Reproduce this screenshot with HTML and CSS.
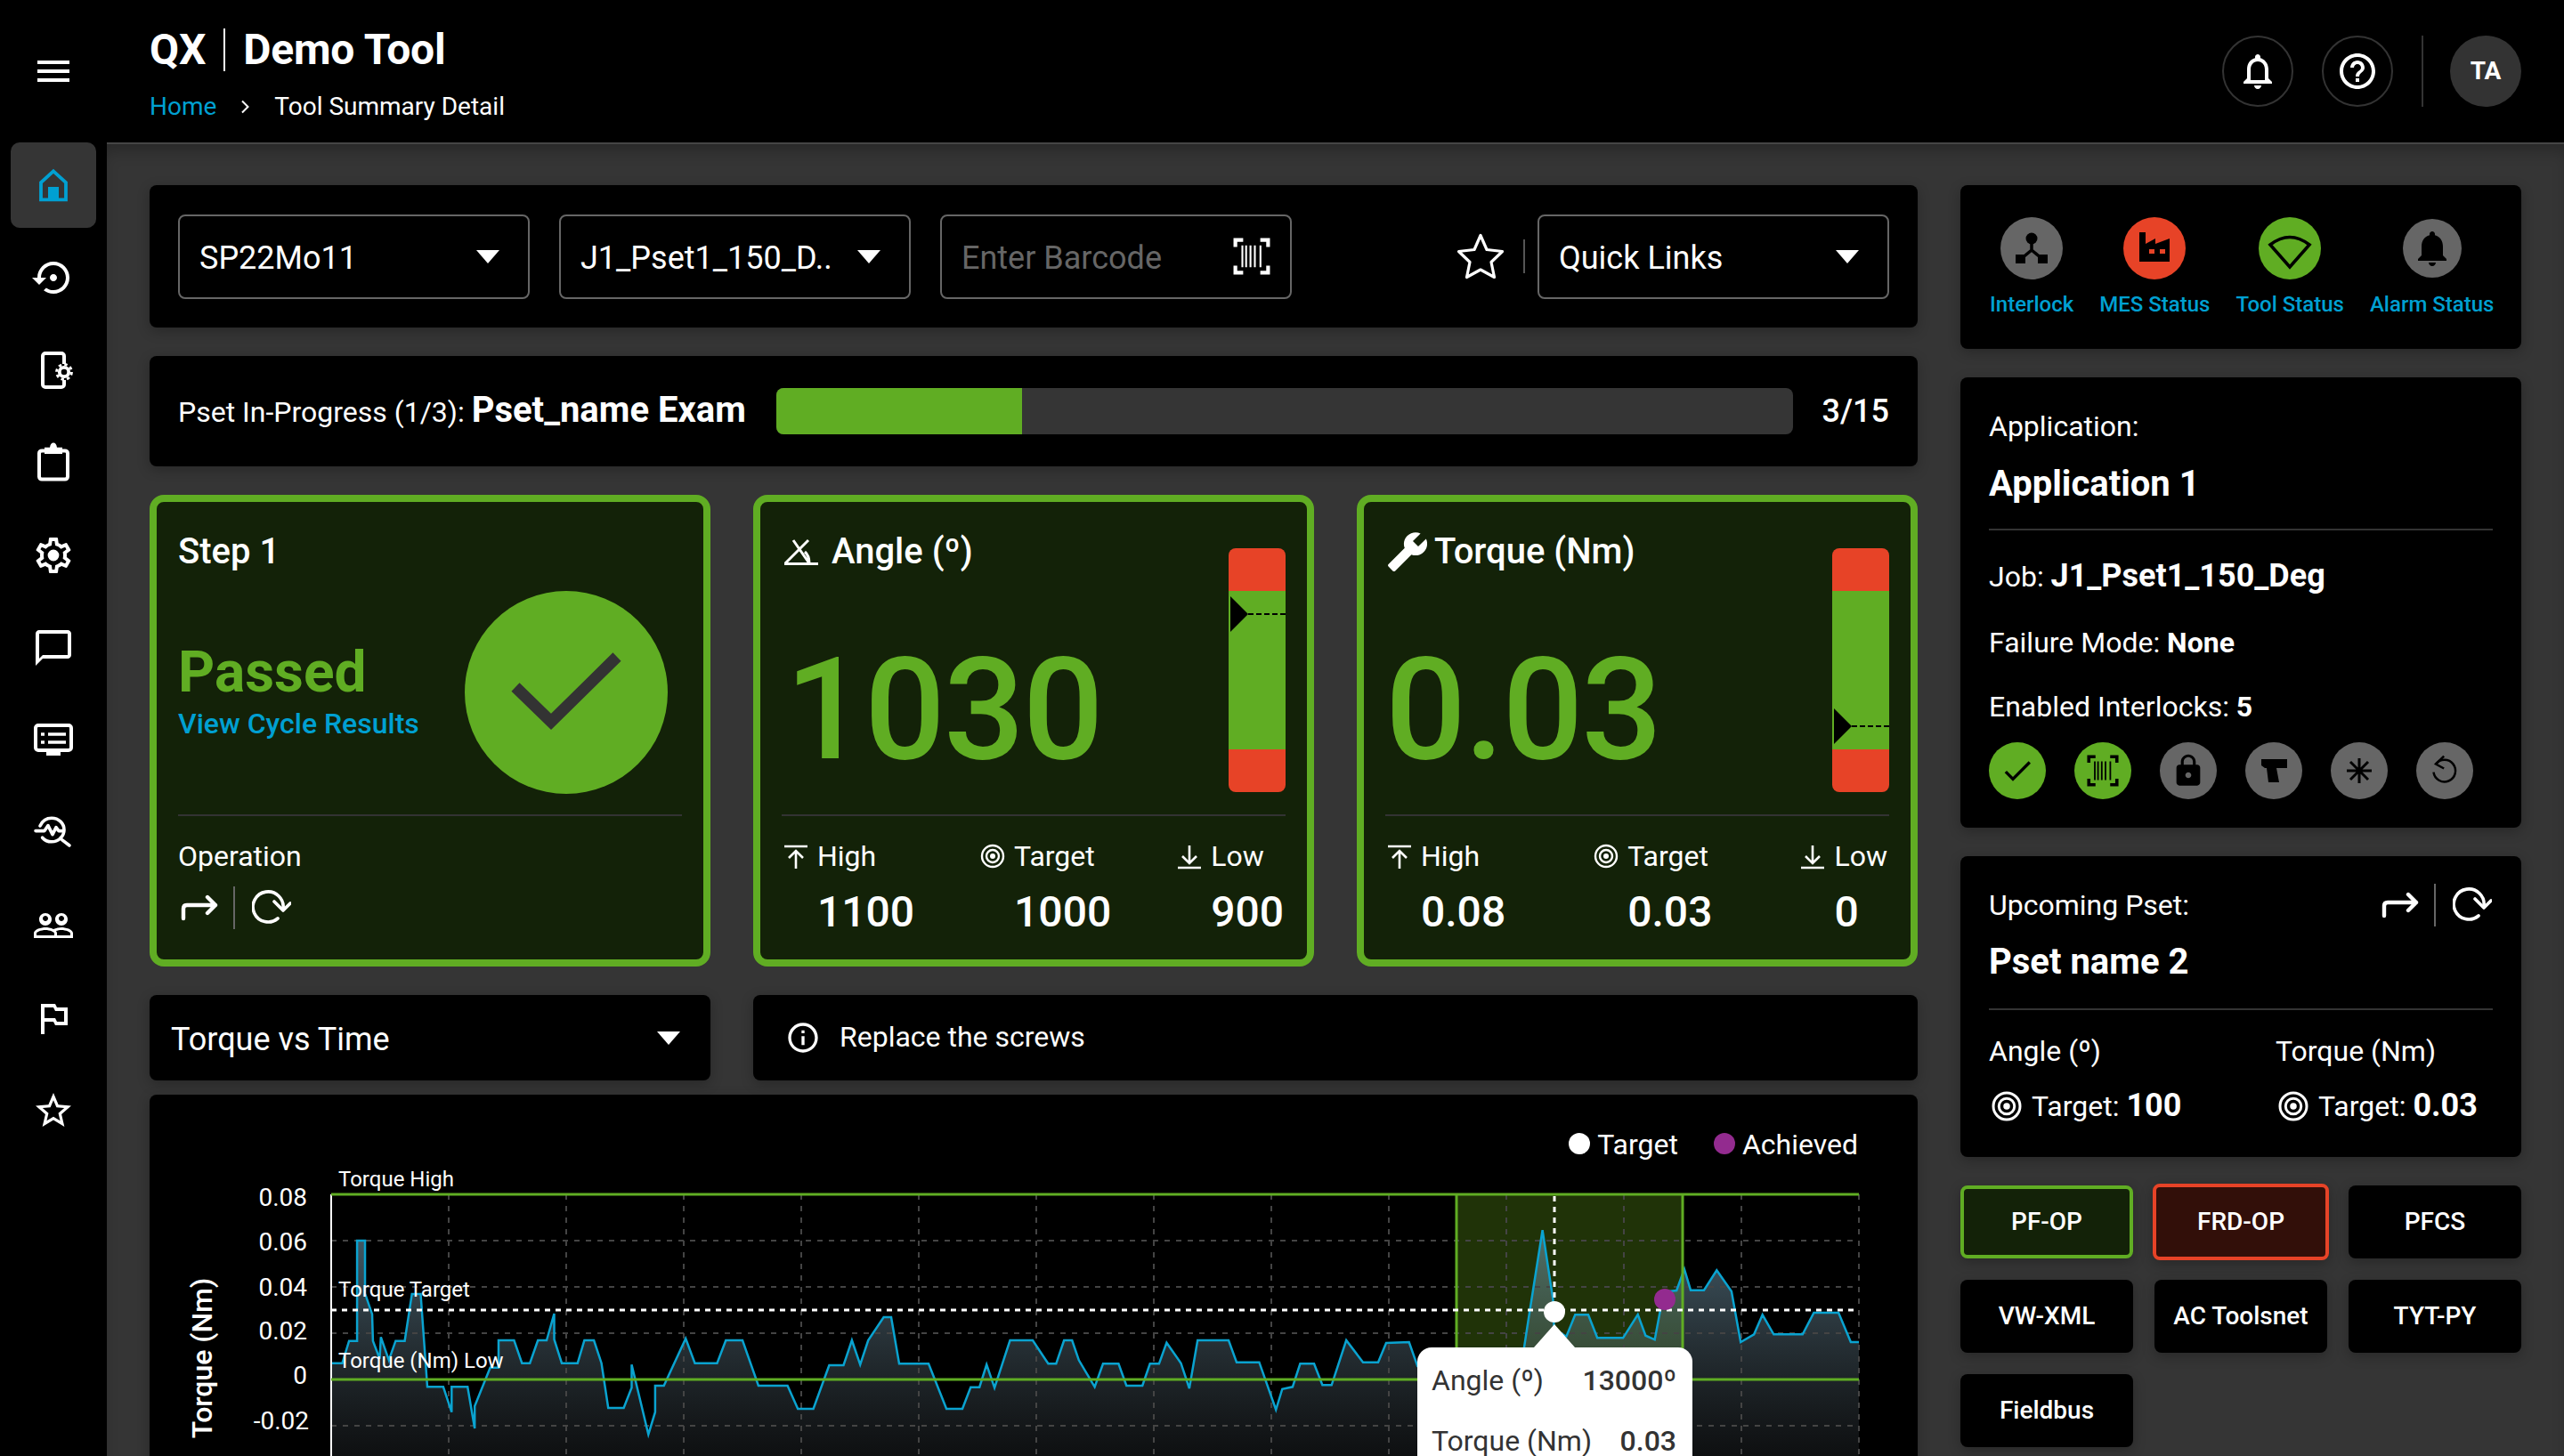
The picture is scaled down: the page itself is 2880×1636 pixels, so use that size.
FILE: index.html
```html
<!DOCTYPE html>
<html lang="en">
<head>
<meta charset="utf-8">
<title>QX Demo Tool</title>
<link rel="stylesheet" href="styles.css">
</head>
<body>
<svg class="defs" aria-hidden="true">
  <symbol id="i-target" viewBox="0 0 32 32"><circle cx="16" cy="16" r="12" fill="none" stroke="currentColor" stroke-width="2.4"/><circle cx="16" cy="16" r="7" fill="none" stroke="currentColor" stroke-width="2.4"/><circle cx="16" cy="16" r="3" fill="currentColor"/></symbol>
  <symbol id="i-high" viewBox="0 0 32 32"><path d="M3 5h26M16 30V11M8 18l8-8 8 8" fill="none" stroke="currentColor" stroke-width="2.6"/></symbol>
  <symbol id="i-low" viewBox="0 0 32 32"><path d="M3 29h26M16 4v19M8 16l8 8 8-8" fill="none" stroke="currentColor" stroke-width="2.6"/></symbol>
  <symbol id="i-forward" viewBox="0 0 44 32"><path d="M4 28V17c0-2.500 1.500-4 4-4h32M31 4l9 9-9 9" fill="none" stroke="currentColor" stroke-width="4.400" stroke-linecap="round" stroke-linejoin="round"/></symbol>
  <symbol id="i-redo" viewBox="0 0 44 40"><path d="M29 32A17 17 0 1 1 35 21" fill="none" stroke="currentColor" stroke-width="3.600" stroke-linecap="round"/><path d="M25 13l10 10 8-8" fill="none" stroke="currentColor" stroke-width="3.600" stroke-linecap="round" stroke-linejoin="round"/></symbol>
  <symbol id="i-barcode" viewBox="0 0 24 24"><path d="M6.500 1.500H1.500V6M17.500 1.500h5V6M6.500 22.500H1.500V18M17.500 22.500h5V18" fill="none" stroke="currentColor" stroke-width="2.400"/><path d="M6 5v14M8.400 5v14M11.200 5v14M14 5v14M17.600 5v14" fill="none" stroke="currentColor" stroke-width="1.200"/></symbol>
</svg>

<header class="topbar">
  <button class="menu-button" aria-label="Menu"><span></span><span></span><span></span></button>
  <div class="brand">
    <h1 class="brand-title"><span>QX</span><i class="brand-rule"></i><span>Demo Tool</span></h1>
    <nav class="crumbs"><a class="crumb-link">Home</a><svg class="crumb-sep" viewBox="0 0 12 16"><path d="M2 1.500 8.500 8 2 14.500" fill="none" stroke="currentColor" stroke-width="2"/></svg><span>Tool Summary Detail</span></nav>
  </div>
  <div class="top-actions">
    <button class="round-button"><svg viewBox="0 0 24 24"><path fill="currentColor" d="M12 22c1.100 0 2-.9 2-2h-4c0 1.100.9 2 2 2zm6-6v-5c0-3.070-1.630-5.640-4.500-6.320V4c0-.83-.67-1.500-1.500-1.500s-1.500.67-1.500 1.500v.68C7.640 5.360 6 7.920 6 11v5l-2 2v1h16v-1l-2-2zm-2 1H8v-6c0-2.480 1.510-4.500 4-4.500s4 2.020 4 4.500v6z"/></svg></button>
    <button class="round-button"><svg viewBox="0 0 24 24"><path fill="currentColor" d="M11 18h2v-2h-2v2zm1-16C6.480 2 2 6.480 2 12s4.480 10 10 10 10-4.480 10-10S17.520 2 12 2zm0 18c-4.410 0-8-3.590-8-8s3.590-8 8-8 8 3.590 8 8-3.590 8-8 8zm0-14c-2.210 0-4 1.790-4 4h2c0-1.100.9-2 2-2s2 .9 2 2c0 2-3 1.750-3 5h2c0-2.250 3-2.500 3-5 0-2.210-1.790-4-4-4z"/></svg></button>
    <i class="top-rule"></i>
    <div class="avatar">TA</div>
  </div>
</header>

<div class="shell">
  <aside class="sidebar">
    <a class="nav-item nav-active"><svg viewBox="0 0 24 24"><path d="M12 4.200 19 10.600V20.200H5V10.600Z" fill="none" stroke="currentColor" stroke-width="1.900"/><rect x="9" y="13" width="6" height="8" fill="currentColor"/></svg></a>
    <a class="nav-item"><svg viewBox="0 0 24 24"><path fill="currentColor" d="M14 12c0-1.100-.9-2-2-2s-2 .9-2 2 .9 2 2 2 2-.9 2-2zm-2-9c-4.970 0-9 4.030-9 9H0l4 4 4-4H5c0-3.870 3.130-7 7-7s7 3.130 7 7-3.130 7-7 7c-1.510 0-2.910-.49-4.060-1.300l-1.420 1.440C8.040 20.300 9.940 21 12 21c4.970 0 9-4.030 9-9s-4.030-9-9-9z"/></svg></a>
    <a class="nav-item"><svg viewBox="0 0 24 24"><path d="M18 8.500V4a1.500 1.500 0 0 0-1.500-1.500h-9A1.500 1.500 0 0 0 6 4v16a1.500 1.500 0 0 0 1.500 1.500h9A1.500 1.500 0 0 0 18 20v-2.500" fill="none" stroke="currentColor" stroke-width="2"/><circle cx="18" cy="13" r="2.600" fill="none" stroke="currentColor" stroke-width="1.900"/><circle cx="18" cy="13" r="4.200" fill="none" stroke="currentColor" stroke-width="1.500" stroke-dasharray="1.700 1.600"/></svg></a>
    <a class="nav-item"><svg viewBox="0 0 24 24"><path d="M7 5.200H5.500A1.500 1.500 0 0 0 4 6.700v13.100a1.500 1.500 0 0 0 1.500 1.500h13a1.500 1.500 0 0 0 1.500-1.500V6.700a1.500 1.500 0 0 0-1.500-1.500H17" fill="none" stroke="currentColor" stroke-width="2"/><path fill="currentColor" d="M7 3.400h3c.3-1.800 1-2.600 2-2.600s1.700.8 2 2.600h3V7H7z"/></svg></a>
    <a class="nav-item"><svg viewBox="0 0 24 24"><path fill="currentColor" d="M19.430 12.980c.04-.32.07-.64.07-.98 0-.34-.03-.66-.07-.98l2.110-1.650c.19-.15.24-.42.12-.64l-2-3.460c-.09-.16-.26-.25-.44-.25-.06 0-.12.01-.17.03l-2.490 1c-.52-.4-1.080-.73-1.690-.98l-.38-2.650C14.460 2.180 14.250 2 14 2h-4c-.25 0-.46.18-.49.42l-.38 2.650c-.61.25-1.170.59-1.690.98l-2.490-1c-.06-.02-.12-.03-.18-.03-.17 0-.34.09-.43.25l-2 3.460c-.13.22-.07.49.12.64l2.110 1.650c-.04.32-.07.65-.07.98 0 .33.03.66.07.98l-2.110 1.650c-.19.15-.24.42-.12.64l2 3.460c.09.16.26.25.44.25.06 0 .12-.01.17-.03l2.490-1c.52.4 1.080.73 1.690.98l.38 2.650c.03.24.24.42.49.42h4c.25 0 .46-.18.49-.42l.38-2.650c.61-.25 1.170-.59 1.690-.98l2.490 1c.06.02.12.03.18.03.17 0 .34-.09.43-.25l2-3.460c.12-.22.07-.49-.12-.64l-2.110-1.650zm-1.980-1.710c.04.31.05.52.05.73 0 .21-.02.43-.05.73l-.14 1.130.89.7 1.080.84-.7 1.210-1.270-.51-1.040-.42-.9.68c-.43.32-.84.56-1.250.73l-1.060.43-.16 1.130-.2 1.350h-1.400l-.19-1.350-.16-1.130-1.060-.43c-.43-.18-.83-.41-1.230-.71l-.91-.7-1.060.43-1.270.51-.7-1.210 1.080-.84.89-.7-.14-1.130c-.03-.31-.05-.54-.05-.74s.02-.43.05-.73l.14-1.130-.89-.7-1.080-.84.7-1.210 1.270.51 1.040.42.9-.68c.43-.32.84-.56 1.250-.73l1.060-.43.16-1.130.2-1.350h1.390l.19 1.350.16 1.130 1.060.43c.43.18.83.41 1.230.71l.91.7 1.060-.43 1.270-.51.7 1.210-1.070.85-.89.7.14 1.130zM12 8.800a3.200 3.200 0 1 0 0 6.400 3.200 3.200 0 0 0 0-6.400z"/></svg></a>
    <a class="nav-item"><svg viewBox="0 0 24 24"><path fill="currentColor" d="M20 2H4c-1.100 0-2 .9-2 2v18l4-4h14c1.100 0 2-.9 2-2V4c0-1.100-.9-2-2-2zm0 14H6l-2 2V4h16v12z"/></svg></a>
    <a class="nav-item"><svg viewBox="0 0 24 24"><rect x="2" y="3.500" width="20" height="14" rx="1.500" fill="none" stroke="currentColor" stroke-width="2"/><path d="M5 8.500h2M9 8.500h10M5 13h2M9 13h10" fill="none" stroke="currentColor" stroke-width="1.700"/><rect x="8" y="18" width="8" height="2.500" fill="currentColor"/></svg></a>
    <a class="nav-item"><svg viewBox="0 0 24 24" fill="none" stroke="currentColor" stroke-width="1.800" stroke-linecap="round" stroke-linejoin="round"><path d="M4.500 8C5.800 5 8.500 3.600 11 3.600c4 0 7 3 7 6.600 0 1.800-.8 3.400-2 4.600"/><path d="M5.800 14.600c1.300 1.500 3.200 2.300 5.200 2.300 1.800 0 3.500-.6 4.800-1.800"/><path d="M2 10.800h5l2-3 2.500 5 2-4 1.500 2h2M16.800 15.800 21 19"/></svg></a>
    <a class="nav-item"><svg viewBox="0 0 24 24"><path fill="currentColor" d="M16.500 13c-1.200 0-3.070.34-4.500 1-1.430-.67-3.300-1-4.500-1C5.330 13 1 14.080 1 16.250V19h22v-2.750c0-2.170-4.330-3.250-6.500-3.250zm-4 4.500h-10v-1.250c0-.54 2.560-1.750 5-1.750s5 1.210 5 1.750v1.250zm9 0H14v-1.250c0-.46-.2-.86-.52-1.220.88-.3 1.960-.53 3.020-.53 2.440 0 5 1.210 5 1.750v1.250zM7.500 12c1.930 0 3.500-1.570 3.500-3.500S9.430 5 7.500 5 4 6.570 4 8.500 5.570 12 7.500 12zm0-5.500c.83 0 1.500.67 1.500 1.500s-.67 1.500-1.500 1.500S6 8.830 6 8s.67-1.500 1.500-1.500zm9 5.500c1.930 0 3.500-1.570 3.500-3.500S18.430 5 16.500 5 13 6.570 13 8.500s1.570 3.500 3.500 3.500zm0-5.500c.83 0 1.500.67 1.500 1.500s-.67 1.500-1.500 1.500S15 8.830 15 8s.67-1.500 1.500-1.500z"/></svg></a>
    <a class="nav-item"><svg viewBox="0 0 24 24"><path fill="currentColor" d="M14 6l-1-2H5v17h2v-7h5l1 2h7V6h-6zm4 8h-4l-1-2H7V6h5l1 2h5v6z"/></svg></a>
    <a class="nav-item"><svg viewBox="0 0 24 24"><path fill="currentColor" d="M22 9.240l-7.190-.62L12 2 9.190 8.630 2 9.240l5.460 4.730L5.820 21 12 17.270 18.180 21l-1.630-7.030L22 9.240zM12 15.400l-3.760 2.270 1-4.280-3.320-2.880 4.380-.38L12 6.100l1.710 4.040 4.380.38-3.320 2.880 1 4.280L12 15.400z"/></svg></a>
  </aside>

  <main class="content">
    <section class="col-left">
      <div class="panel toolbar">
        <div class="select"><span>SP22Mo11</span><i class="caret"></i></div>
        <div class="select"><span>J1_Pset1_150_D..</span><i class="caret"></i></div>
        <div class="select"><span class="placeholder">Enter Barcode</span><svg class="barcode-icon"><use href="#i-barcode"/></svg></div>
        <div class="toolbar-end">
          <svg class="fav-star" viewBox="0 0 54 52"><path d="M27 2.500 34 18.500 51.500 20.500 39 32.500 42.500 49.500 27 41 11.500 49.500 15 32.500 2.500 20.500 20 18.500Z" fill="none" stroke="currentColor" stroke-width="3.200" stroke-linejoin="round"/></svg>
          <i class="toolbar-rule"></i>
          <div class="select"><span>Quick Links</span><i class="caret"></i></div>
        </div>
      </div>

      <div class="panel progress">
        <div class="progress-text">Pset In-Progress (1/3): <b>Pset_name Exam</b></div>
        <div class="track"><div class="track-fill" style="width:24.2%"></div></div>
        <div class="progress-count">3/15</div>
      </div>

      <div class="cards">
        <article class="card">
          <h2 class="card-title">Step 1</h2>
          <div class="step-main">
            <div class="step-text">
              <div class="passed">Passed</div>
              <a class="link-results">View Cycle Results</a>
            </div>
            <svg class="pass-circle" viewBox="0 0 228 228"><circle cx="114" cy="114" r="114" fill="#60ad23"/><path d="M57 108 97 147 171 74" fill="none" stroke="#333" stroke-width="13"/></svg>
          </div>
          <div class="rule"></div>
          <div class="stat-label op-label">Operation</div>
          <div class="op-icons"><svg class="op-forward"><use href="#i-forward"/></svg><i class="op-rule"></i><svg class="op-redo"><use href="#i-redo"/></svg></div>
        </article>

        <article class="card">
          <div class="metric">
            <div class="metric-left">
              <h2 class="card-title title-icon"><svg class="title-svg" viewBox="0 0 44 32"><path d="M3 29.500h38M4 29 30 3M13 3l18 26M26 16c3.500 3 5 8 5 13" fill="none" stroke="currentColor" stroke-width="3"/></svg><span>Angle (º)</span></h2>
              <div class="value">1030</div>
            </div>
            <div class="gauge"><i class="gauge-red"></i><i class="gauge-green"></i><i class="gauge-red"></i><div class="marker marker-high"><i class="marker-tri"></i><i class="marker-dash"></i></div></div>
          </div>
          <div class="rule"></div>
          <div class="stats">
            <div class="stat"><svg class="stat-icon"><use href="#i-high"/></svg><span class="stat-label">High</span><b class="stat-value">1100</b></div>
            <div class="stat"><svg class="stat-icon"><use href="#i-target"/></svg><span class="stat-label">Target</span><b class="stat-value">1000</b></div>
            <div class="stat"><svg class="stat-icon"><use href="#i-low"/></svg><span class="stat-label">Low</span><b class="stat-value">900</b></div>
          </div>
        </article>

        <article class="card">
          <div class="metric">
            <div class="metric-left">
              <h2 class="card-title title-icon"><svg class="title-wrench" viewBox="0 0 24 24"><path fill="currentColor" transform="matrix(-1 0 0 1 24 0)" d="M22.700 19l-9.100-9.100c.9-2.300.4-5-1.500-6.900-2-2-5-2.400-7.400-1.300L9 6 6 9 1.600 4.700C.4 7.100.9 10.100 2.900 12.100c1.900 1.900 4.600 2.400 6.900 1.500l9.100 9.100c.4.4 1 .4 1.400 0l2.300-2.300c.5-.4.5-1.100.1-1.400z"/></svg><span>Torque (Nm)</span></h2>
              <div class="value value-flush">0.03</div>
            </div>
            <div class="gauge"><i class="gauge-red"></i><i class="gauge-green"></i><i class="gauge-red"></i><div class="marker marker-low"><i class="marker-tri"></i><i class="marker-dash"></i></div></div>
          </div>
          <div class="rule"></div>
          <div class="stats">
            <div class="stat"><svg class="stat-icon"><use href="#i-high"/></svg><span class="stat-label">High</span><b class="stat-value">0.08</b></div>
            <div class="stat"><svg class="stat-icon"><use href="#i-target"/></svg><span class="stat-label">Target</span><b class="stat-value">0.03</b></div>
            <div class="stat"><svg class="stat-icon"><use href="#i-low"/></svg><span class="stat-label">Low</span><b class="stat-value">0</b></div>
          </div>
        </article>
      </div>

      <div class="message-row">
        <div class="panel chart-select"><span>Torque vs Time</span><i class="caret"></i></div>
        <div class="panel message"><svg class="info-icon" viewBox="0 0 24 24"><path fill="currentColor" d="M11 7h2v2h-2zm0 4h2v6h-2zm1-9C6.480 2 2 6.480 2 12s4.480 10 10 10 10-4.480 10-10S17.520 2 12 2zm0 18c-4.410 0-8-3.590-8-8s3.590-8 8-8 8 3.590 8 8-3.590 8-8 8z"/></svg><span class="message-text">Replace the screws</span></div>
      </div>

      <div class="panel chart">
        <div class="legend">
          <span class="legend-item"><i class="dot dot-white"></i>Target</span>
          <span class="legend-item"><i class="dot dot-purple"></i>Achieved</span>
        </div>
        <svg class="plot" viewBox="168 1304 1986 332">
          <defs>
            <linearGradient id="areaFill" gradientUnits="userSpaceOnUse" x1="0" y1="1380" x2="0" y2="1654">
              <stop offset="0" stop-color="#6e96aa" stop-opacity=".62"/>
              <stop offset="1" stop-color="#50585f" stop-opacity=".14"/>
            </linearGradient>
          </defs>
          <rect x="1636" y="1342" width="254" height="208" fill="#203308"/>
          <polygon fill="url(#areaFill)" points="372.500,1680 372.500,1531.700 384.500,1531.700 392.100,1506.700 401.100,1506.700 401.100,1394 410,1394 410,1453.300 418,1476.700 418.900,1506.700 426.500,1526.700 427.800,1502.300 436.800,1528.300 444.400,1506.700 454.600,1506.700 462.700,1454 472.500,1454 480,1558.300 497.900,1558.300 507.300,1586.700 507.300,1558.300 525.200,1558.300 533.200,1605 533.200,1580 550.600,1536.700 560,1536.700 560,1506 577.400,1506 586.300,1531.700 595.200,1531.700 604.200,1506 614,1506 622.500,1476 622.500,1505 631,1531.700 648.800,1531.700 656.400,1506 667.100,1506 675.600,1531.700 683.200,1582 700.600,1582 709.500,1559.300 709.500,1533.300 728.300,1611.700 735.900,1586.700 735.900,1557 745.700,1557 770.200,1504 780.500,1531.700 805.500,1531.700 815.300,1506 834,1506 851.900,1557 884.600,1557 896.200,1583 913.600,1583 931.400,1534 947.500,1534 956.900,1506 966.200,1533.300 975.200,1506 992.600,1480 1001,1480 1010,1532.300 1043,1532.300 1063.100,1583 1081,1583 1090.300,1558.700 1100.200,1558.700 1108.200,1533.300 1117.100,1559.300 1134.500,1506 1160,1506 1177.400,1532.300 1186.300,1532.300 1195.200,1506 1204.200,1506 1211.800,1528.300 1229.600,1558.300 1239,1532.300 1256.400,1532.300 1265.300,1557 1283.200,1557 1291.700,1532.300 1301.900,1532.300 1310.400,1508.700 1326.500,1531.700 1335.900,1560 1345.200,1506 1380,1506 1389,1530.700 1414.400,1530.700 1433.200,1584 1440.300,1560.700 1451.900,1558.300 1460.400,1532.300 1476,1532.300 1485.400,1556.300 1495.700,1556.300 1512.200,1506 1531,1530.700 1548,1530.700 1557,1509 1582.700,1508 1592.200,1535 1640,1535 1670,1560 1700,1540 1712,1514 1716.700,1483.300 1732.600,1382.300 1744.400,1460 1745.600,1493.300 1759.400,1501.700 1769.300,1477.300 1784,1477.300 1794.200,1503.300 1823.100,1503.300 1839.700,1477 1848.400,1500.700 1858.700,1505.300 1865,1471.700 1868.200,1451.700 1883.200,1450 1891.900,1426 1899,1449.700 1914,1449.700 1928.300,1427.300 1944.900,1451 1955.200,1508 1970.200,1499.300 1979.700,1477.300 1992.300,1499.300 2024.800,1499.300 2037.400,1475 2065.100,1475 2078.900,1508 2088,1508 2088,1680"/>
          <path class="grid-line" d="M372 1394H2088M372 1446H2088M372 1498H2088M372 1602H2088M504 1342V1640M636 1342V1640M768 1342V1640M900 1342V1640M1032 1342V1640M1164 1342V1640M1296 1342V1640M1428 1342V1640M1560 1342V1640M1692 1342V1640M1824 1342V1640M1956 1342V1640M2088 1342V1640"/>
          <polyline class="data-line" points="372.500,1531.700 384.500,1531.700 392.100,1506.700 401.100,1506.700 401.100,1394 410,1394 410,1453.300 418,1476.700 418.900,1506.700 426.500,1526.700 427.800,1502.300 436.800,1528.300 444.400,1506.700 454.600,1506.700 462.700,1454 472.500,1454 480,1558.300 497.900,1558.300 507.300,1586.700 507.300,1558.300 525.200,1558.300 533.200,1605 533.200,1580 550.600,1536.700 560,1536.700 560,1506 577.400,1506 586.300,1531.700 595.200,1531.700 604.200,1506 614,1506 622.500,1476 622.500,1505 631,1531.700 648.800,1531.700 656.400,1506 667.100,1506 675.600,1531.700 683.200,1582 700.600,1582 709.500,1559.300 709.500,1533.300 728.300,1611.700 735.900,1586.700 735.900,1557 745.700,1557 770.200,1504 780.500,1531.700 805.500,1531.700 815.300,1506 834,1506 851.900,1557 884.600,1557 896.200,1583 913.600,1583 931.400,1534 947.500,1534 956.900,1506 966.200,1533.300 975.200,1506 992.600,1480 1001,1480 1010,1532.300 1043,1532.300 1063.100,1583 1081,1583 1090.300,1558.700 1100.200,1558.700 1108.200,1533.300 1117.100,1559.300 1134.500,1506 1160,1506 1177.400,1532.300 1186.300,1532.300 1195.200,1506 1204.200,1506 1211.800,1528.300 1229.600,1558.300 1239,1532.300 1256.400,1532.300 1265.300,1557 1283.200,1557 1291.700,1532.300 1301.900,1532.300 1310.400,1508.700 1326.500,1531.700 1335.900,1560 1345.200,1506 1380,1506 1389,1530.700 1414.400,1530.700 1433.200,1584 1440.300,1560.700 1451.900,1558.300 1460.400,1532.300 1476,1532.300 1485.400,1556.300 1495.700,1556.300 1512.200,1506 1531,1530.700 1548,1530.700 1557,1509 1582.700,1508 1592.200,1535 1640,1535 1670,1560 1700,1540 1712,1514 1716.700,1483.300 1732.600,1382.300 1744.400,1460 1745.600,1493.300 1759.400,1501.700 1769.300,1477.300 1784,1477.300 1794.200,1503.300 1823.100,1503.300 1839.700,1477 1848.400,1500.700 1858.700,1505.300 1865,1471.700 1868.200,1451.700 1883.200,1450 1891.900,1426 1899,1449.700 1914,1449.700 1928.300,1427.300 1944.900,1451 1955.200,1508 1970.200,1499.300 1979.700,1477.300 1992.300,1499.300 2024.800,1499.300 2037.400,1475 2065.100,1475 2078.900,1508 2088,1508"/>
          <path class="axis-line" d="M372 1342V1640"/>
          <path class="limit-line" d="M372 1342H2088M372 1550H2088M1636 1342V1550M1890 1342V1550"/>
          <path class="target-line" d="M372 1472H2088M1746 1344V1474"/>
          <circle cx="1746" cy="1474" r="12" fill="#fff"/>
          <circle cx="1870" cy="1460" r="12" fill="#932b8f"/>
          <text class="plot-label" x="380" y="1333">Torque High</text>
          <text class="plot-label" x="380" y="1457">Torque Target</text>
          <text class="plot-label" x="380" y="1537">Torque (Nm) Low</text>
          <g class="tick">
            <text x="345" y="1355">0.08</text>
            <text x="345" y="1405">0.06</text>
            <text x="345" y="1456">0.04</text>
            <text x="345" y="1505">0.02</text>
            <text x="345" y="1555">0</text>
            <text x="347" y="1606">-0.02</text>
            <text x="347" y="1657">-0.04</text>
          </g>
          <text class="axis-title" transform="translate(238 1526) rotate(-90)">Torque (Nm)</text>
        </svg>
        <div class="tooltip">
          <div class="tip-row"><span>Angle (º)</span><b>13000º</b></div>
          <div class="tip-row"><span>Torque (Nm)</span><b>0.03</b></div>
        </div>
      </div>
    </section>

    <section class="col-right">
      <div class="panel status-panel">
        <div class="status-item"><span class="status-circle st-grey"><svg viewBox="0 0 70 70"><circle cx="35" cy="24" r="6.500" fill="#000"/><path d="M35 28v9L23 47M35 37l12 10" fill="none" stroke="#000" stroke-width="3.500"/><rect x="17" y="42" width="11" height="10" fill="#000"/><rect x="42" y="42" width="11" height="10" fill="#000"/></svg></span><span class="status-label">Interlock</span></div>
        <div class="status-item"><span class="status-circle st-red"><svg viewBox="0 0 70 70"><path fill="#000" fill-rule="evenodd" d="M18 17h7v13l11-6v6l16-6v26H18zM29 36v5h6v-5zM41 36v5h6v-5z"/></svg></span><span class="status-label">MES Status</span></div>
        <div class="status-item"><span class="status-circle st-green"><svg viewBox="0 0 70 70"><path d="M13 31Q35 14 57 31L35 56Z" fill="none" stroke="#000" stroke-width="3.600" stroke-linejoin="miter"/></svg></span><span class="status-label">Tool Status</span></div>
        <div class="status-item"><span class="status-circle st-grey st-small"><svg viewBox="0 0 24 24"><path fill="#000" d="M12 22c1.100 0 2-.9 2-2h-4c0 1.100.89 2 2 2zm6-6v-5c0-3.070-1.640-5.640-4.500-6.320V4c0-.83-.67-1.500-1.500-1.500s-1.500.67-1.500 1.500v.68C7.630 5.360 6 7.920 6 11v5l-2 2v1h16v-1l-2-2z"/></svg></span><span class="status-label">Alarm Status</span></div>
      </div>

      <div class="panel info-panel">
        <div class="line">Application:</div>
        <div class="info-name">Application 1</div>
        <div class="rule rule-info"></div>
        <div class="line line-job">Job: <b>J1_Pset1_150_Deg</b></div>
        <div class="line line-fail">Failure Mode: <b>None</b></div>
        <div class="line line-enabled">Enabled Interlocks: <b>5</b></div>
        <div class="lock-row">
          <span class="lock on"><svg viewBox="0 0 24 24"><path fill="#000" d="M9 16.170 4.830 12l-1.420 1.410L9 19 21 7l-1.410-1.410z"/></svg></span>
          <span class="lock on"><svg class="lock-code"><use href="#i-barcode"/></svg></span>
          <span class="lock"><svg viewBox="0 0 24 24"><path fill="#000" d="M18 8h-1V6c0-2.760-2.240-5-5-5S7 3.240 7 6v2H6c-1.100 0-2 .9-2 2v10c0 1.100.9 2 2 2h12c1.100 0 2-.9 2-2V10c0-1.100-.9-2-2-2zm-6 9c-1.100 0-2-.9-2-2s.9-2 2-2 2 .9 2 2-.9 2-2 2zm3.100-9H8.900V6c0-1.710 1.390-3.100 3.100-3.100 1.710 0 3.100 1.390 3.100 3.100v2z"/></svg></span>
          <span class="lock"><svg class="lock-full" viewBox="0 0 64 64"><path fill="#000" d="M18 19h29v10H35l3 16H26l-2-16h-2l-4-3z"/></svg></span>
          <span class="lock"><svg class="lock-full" viewBox="0 0 64 64"><path d="M32 18v28M18 32h28M22 22l20 20M42 22 22 42" fill="none" stroke="#000" stroke-width="3"/></svg></span>
          <span class="lock"><svg viewBox="0 0 24 24"><path d="M6 7.500a7.400 7.400 0 1 1-1.500 5.500" fill="none" stroke="#000" stroke-width="1.500"/><path d="M11.500 2.200 6 7.500l5.500 3" fill="none" stroke="#000" stroke-width="1.500"/></svg></span>
        </div>
      </div>

      <div class="panel upcoming">
        <div class="upcoming-head"><span>Upcoming Pset:</span><span class="upcoming-icons"><svg class="op-forward"><use href="#i-forward"/></svg><i class="op-rule"></i><svg class="op-redo"><use href="#i-redo"/></svg></span></div>
        <div class="info-name">Pset name 2</div>
        <div class="rule rule-info"></div>
        <div class="upcoming-grid">
          <div class="line">Angle (º)</div>
          <div class="line">Torque (Nm)</div>
          <div class="line target-line-row"><svg class="tgt-icon"><use href="#i-target"/></svg><span>Target: <b>100</b></span></div>
          <div class="line target-line-row"><svg class="tgt-icon"><use href="#i-target"/></svg><span>Target: <b>0.03</b></span></div>
        </div>
      </div>

      <div class="chips">
        <button class="chip chip-ok">PF-OP</button>
        <button class="chip chip-bad">FRD-OP</button>
        <button class="chip">PFCS</button>
        <button class="chip">VW-XML</button>
        <button class="chip">AC Toolsnet</button>
        <button class="chip">TYT-PY</button>
        <button class="chip">Fieldbus</button>
      </div>
    </section>
  </main>
</div>
</body>
</html>
```
FILE: styles.css
```css
* { box-sizing: border-box; }
html, body { margin: 0; padding: 0; height: 100%; }
body {
  width: 2880px; height: 1636px; overflow: hidden;
  background: #000; color: #fff;
  font-family: Roboto, "Noto Sans", sans-serif;
  font-size: 32px; line-height: 40px;
}
.defs { position: absolute; width: 0; height: 0; }
button { font: inherit; color: inherit; background: none; border: 0; padding: 0; }
b { font-weight: 700; }
i { display: block; font-style: normal; }

/* top bar */
.topbar { height: 160px; display: flex; background: #000; }
.menu-button { width: 120px; height: 160px; display: flex; flex-direction: column; align-items: center; justify-content: center; gap: 6px; }
.menu-button span { display: block; width: 36px; height: 4px; background: #fff; }
.brand { padding: 28px 0 0 48px; }
.brand-title { margin: 0; display: flex; align-items: center; height: 56px; font-size: 48px; line-height: 56px; font-weight: 700; letter-spacing: -.2px; }
.brand-rule { width: 2px; height: 48px; background: #fff; margin: 0 20px; }
.crumbs { display: flex; align-items: center; margin-top: 18px; font-size: 28px; line-height: 36px; }
.crumb-link { color: #00a0d2; }
.crumb-sep { width: 12px; height: 16px; margin: 0 26px 0 27px; }
.top-actions { margin-left: auto; padding: 40px 48px 0 0; display: flex; height: 120px; align-items: center; }
.round-button { width: 80px; height: 80px; border: 2px solid #333; border-radius: 50%; margin-right: 32px; display: flex; align-items: center; justify-content: center; }
.round-button svg { width: 48px; height: 48px; }
.top-rule { width: 2px; height: 80px; background: #333; margin-right: 30px; }
.avatar { width: 80px; height: 80px; border-radius: 50%; background: #333; display: flex; align-items: center; justify-content: center; font-size: 28px; font-weight: 700; }

/* shell */
.shell { display: flex; height: 1476px; }
.sidebar { width: 120px; flex: none; padding: 0 12px; display: flex; flex-direction: column; gap: 8px; background: #000; }
.nav-item { height: 96px; flex: none; border-radius: 10px; display: flex; align-items: center; justify-content: center; color: #fff; }
.nav-item svg { width: 48px; height: 48px; }
.nav-active { background: #353535; color: #00a0d2; }
.content {
  flex: 1; display: grid; grid-template-columns: 1986px 630px; column-gap: 48px;
  padding: 46px 48px 0; background: #353535; border-top: 2px solid #454545;
  box-shadow: inset 0 12px 18px -6px rgba(0,0,0,.28); overflow: hidden;
}
.col-left, .col-right { display: flex; flex-direction: column; min-width: 0; }
.panel { background: #000; border-radius: 8px; box-shadow: 0 4px 14px rgba(0,0,0,.25); }

/* toolbar */
.toolbar { height: 160px; display: flex; align-items: center; padding: 0 32px; gap: 33px; }
.select { width: 395px; height: 95px; flex: none; display: flex; align-items: center; justify-content: space-between; padding: 0 32px 0 22px; border: 2px solid #666; border-radius: 8px; font-size: 36px; line-height: 44px; }
.select span, .chart-select span { padding-top: 4px; }
.caret { width: 0; height: 0; border-left: 13px solid transparent; border-right: 13px solid transparent; border-top: 15px solid #fff; flex: none; }
.placeholder { color: #666; }
.barcode-icon { width: 42px; height: 42px; margin-right: -10px; color: #fff; }
.toolbar-end { margin-left: auto; display: flex; align-items: center; }
.fav-star { width: 54px; height: 52px; margin-right: 21px; }
.toolbar-rule { width: 2px; height: 38px; background: #555; margin-right: 14px; }

/* progress */
.progress { height: 124px; margin-top: 32px; display: flex; align-items: center; padding: 0 32px; }
.progress-text { font-size: 32px; white-space: nowrap; }
.progress-text b { font-size: 40px; font-weight: 700; }
.track { flex: 1; height: 52px; margin: 0 33px 0 34px; background: #353535; border-radius: 8px; overflow: hidden; }
.track-fill { height: 100%; background: #60ad23; }
.progress-count { font-size: 36px; font-weight: 500; }

/* cards */
.cards { margin-top: 32px; display: grid; grid-template-columns: repeat(3, 630px); column-gap: 48px; }
.card { height: 530px; border: 8px solid #60ad23; border-radius: 16px; background: #132208; padding: 32px 24px 0; }
.card-title { margin: 0; font-size: 40px; line-height: 48px; font-weight: 500; height: 48px; }
.title-icon { display: flex; align-items: center; gap: 12px; padding-left: 2px; }
.title-svg { width: 44px; height: 32px; flex: none; margin-left: -2px; }
.title-wrench { width: 48px; height: 48px; flex: none; margin-left: -1px; margin-right: -6px; }
.step-main { display: flex; align-items: center; justify-content: space-between; padding-right: 16px; margin-top: 20px; height: 228px; }
.step-text { padding-bottom: 4px; }
.passed { font-size: 64px; line-height: 72px; font-weight: 700; color: #60ad23; }
.link-results { display: block; margin-top: 1px; font-size: 32px; line-height: 40px; font-weight: 500; color: #00a0d2; }
.pass-circle { width: 228px; height: 228px; flex: none; }
.rule { height: 2px; background: #333; margin-top: 23px; }
.stat-label { font-size: 32px; line-height: 40px; }
.op-label { display: block; margin-top: 25px; }
.op-icons { display: flex; align-items: center; margin-top: 14px; height: 48px; }
.op-forward { width: 44px; height: 32px; margin-left: 2px; color: #fff; flex: none; }
.op-rule { width: 2px; height: 48px; background: #666; margin: 0 19px 0 16px; flex: none; }
.op-redo { width: 44px; height: 40px; color: #fff; flex: none; }

.metric { display: flex; height: 296px; }
.metric-left { flex: 1; min-width: 0; }
.value { margin-top: 74px; font-size: 160px; line-height: 160px; font-weight: 500; color: #60ad23; margin-left: 4px; letter-spacing: -2px; }
.value-flush { margin-left: 0; }
.gauge { position: relative; width: 64px; height: 274px; margin-top: 20px; border-radius: 8px; overflow: hidden; display: flex; flex-direction: column; flex: none; align-self: flex-start; }
.gauge-red { height: 48px; background: #e74327; flex: none; }
.gauge-green { flex: 1; background: #60ad23; }
.marker { position: absolute; left: 0; width: 64px; height: 40px; }
.marker-high { top: 54px; }
.marker-low { top: 180px; }
.marker-tri { position: absolute; left: 2px; top: 0; width: 0; height: 0; border-top: 20px solid transparent; border-bottom: 20px solid transparent; border-left: 20px solid #000; }
.marker-dash { position: absolute; left: 22px; right: 0; top: 19px; border-top: 2px dashed #000; }
.stats { display: flex; justify-content: space-between; margin-top: 25px; padding-right: 2px; }
.stat { display: grid; grid-template-columns: 40px auto; }
.stat-icon { width: 32px; height: 32px; align-self: center; color: #fff; }
.stat-value { grid-column: 2; margin-top: 15px; font-size: 48px; line-height: 56px; font-weight: 500; }

/* message row */
.message-row { margin-top: 32px; display: grid; grid-template-columns: 630px 1308px; column-gap: 48px; }
.chart-select { height: 96px; display: flex; align-items: center; justify-content: space-between; padding: 0 34px 0 24px; font-size: 36px; }
.message { height: 96px; display: flex; align-items: center; padding-left: 36px; gap: 21px; font-size: 32px; }
.message-text { padding-bottom: 3px; }
.info-icon { width: 40px; height: 40px; flex: none; }

/* chart */
.chart { position: relative; margin-top: 16px; height: 420px; overflow: hidden; padding-top: 38px; }
.legend { display: flex; justify-content: flex-end; gap: 40px; padding-right: 67px; height: 36px; font-size: 32px; }
.legend-item { display: flex; align-items: center; gap: 8px; }
.dot { width: 24px; height: 24px; border-radius: 50%; margin-top: -2px; }
.dot-white { background: #fff; }
.dot-purple { background: #932b8f; }
.plot { display: block; width: 1986px; height: 332px; }
.grid-line { fill: none; stroke: #444; stroke-width: 2; stroke-dasharray: 6 7; }
.data-line { fill: none; stroke: #0aa3d0; stroke-width: 2.5; stroke-linejoin: miter; }
.axis-line { fill: none; stroke: #fff; stroke-width: 2; }
.limit-line { fill: none; stroke: #60ad23; stroke-width: 3; }
.target-line { fill: none; stroke: #fff; stroke-width: 3; stroke-dasharray: 6 6; }
.plot-label { fill: #fff; font-size: 24px; font-weight: 400; }
.tick text { fill: #fff; font-size: 28px; text-anchor: end; }
.axis-title { fill: #fff; font-size: 32px; font-weight: 500; text-anchor: middle; }
.tooltip { position: absolute; left: 1424px; top: 284px; width: 309px; height: 180px; padding: 17px 18px 0 16px; background: #fff; border-radius: 16px; color: #333; }
.tooltip::before { content: ""; position: absolute; left: 131px; top: -26px; border-left: 23px solid transparent; border-right: 23px solid transparent; border-bottom: 26px solid #fff; }
.tip-row { display: flex; justify-content: space-between; height: 68px; font-size: 32px; line-height: 40px; }
.tip-row b { font-weight: 500; }

/* right column */
.status-panel { height: 184px; display: flex; padding: 36px 0 0 33px; gap: 29px; }
.status-item { display: flex; flex-direction: column; align-items: center; }
.status-circle { width: 70px; height: 70px; border-radius: 50%; display: block; }
.status-circle svg { display: block; width: 100%; height: 100%; }
.st-grey { background: #666; }
.st-red { background: #e74327; }
.st-green { background: #60ad23; }
.st-small { width: 66px; height: 66px; margin: 2px 0; }
.st-small svg { padding: 9px; }
.status-label { margin-top: 12px; font-size: 24px; line-height: 32px; font-weight: 500; color: #00a0d2; white-space: nowrap; }

.info-panel { height: 506px; margin-top: 32px; padding: 35px 32px 0; }
.line { font-size: 32px; line-height: 40px; white-space: nowrap; }
.line b { font-size: 32px; font-weight: 700; line-height: 40px; }
.line-job b, .target-line-row b { font-size: 36px; }
.info-name { margin-top: 21px; font-size: 40px; line-height: 48px; font-weight: 700; }
.rule-info { margin-top: 26px; }
.line-job { margin-top: 31px; }
.line-fail { margin-top: 34px; }
.line-enabled { margin-top: 32px; }
.lock-row { display: flex; gap: 32px; margin-top: 20px; }
.lock { width: 64px; height: 64px; border-radius: 50%; background: #666; display: flex; align-items: center; justify-content: center; }
.lock svg { width: 40px; height: 40px; }
.lock .lock-full { width: 64px; height: 64px; }
.lock .lock-code { width: 36px; height: 36px; color: #000; }
.lock.on { background: #60ad23; }

.upcoming { height: 338px; margin-top: 32px; padding: 35px 32px 0; }
.upcoming-head { display: flex; justify-content: space-between; align-items: center; height: 40px; }
.upcoming-icons { display: flex; align-items: center; margin-right: 1px; }
.upcoming .info-name { margin-top: 20px; }
.upcoming .rule-info { margin-top: 28px; }
.upcoming-grid { display: grid; grid-template-columns: 322px 1fr; row-gap: 21px; margin-top: 26px; }
.target-line-row { display: flex; align-items: center; gap: 8px; }
.tgt-icon { width: 40px; height: 40px; color: #fff; flex: none; }

.chips { margin-top: 32px; display: grid; grid-template-columns: repeat(3, 194px); column-gap: 24px; row-gap: 24px; }
.chip { height: 82px; background: #000; border-radius: 8px; font-size: 28px; line-height: 36px; font-weight: 500; box-shadow: 0 4px 14px rgba(0,0,0,.25); }
.chip-ok { background: #132208; border: 4px solid #60ad23; }
.chip-bad { background: #320f09; border: 4px solid #e74327; margin: -2px; height: 86px; width: 198px; }
```
